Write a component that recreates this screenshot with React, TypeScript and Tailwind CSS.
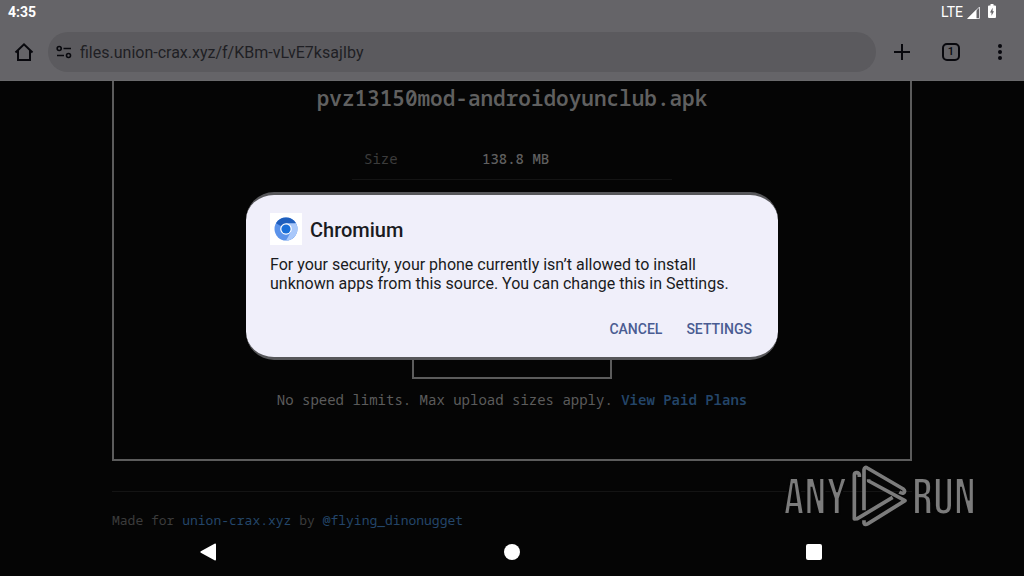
import type { ReactNode } from "react";

type IconButtonProps = {
  label: string;
  children: ReactNode;
};

function IconButton({ label, children }: IconButtonProps) {
  return (
    <button
      type="button"
      aria-label={label}
      className="flex size-6 shrink-0 items-center justify-center"
    >
      {children}
    </button>
  );
}

function StatusBar() {
  return (
    <div className="flex h-6 items-center justify-between px-2 text-sm text-white">
      <span className="font-bold">4:35</span>
      <div className="mr-5 flex items-center gap-1">
        <span>LTE</span>
        <svg viewBox="0 0 13 13" className="size-[13px]" aria-hidden="true">
          <path d="M12.5 1V12.5H1z" fill="none" stroke="#d5d4d8" />
          <path d="M9.500 3.500V13H0z" fill="#fff" />
        </svg>
        <svg viewBox="0 0 8 14" className="mb-[2px] ml-1 h-[14px] w-2" aria-hidden="true">
          <path
            d="M2.5 0h3v1.5H7a1 1 0 0 1 1 1V13a1 1 0 0 1-1 1H1a1 1 0 0 1-1-1V2.500a1 1 0 0 1 1-1h1.500z"
            fill="#fff"
          />
          <path d="M4.600 3.800 2 8.500h1.500v3.200L6 7.200H4.600z" fill="#656468" />
        </svg>
      </div>
    </div>
  );
}

function Toolbar() {
  return (
    <div className="flex h-14 items-center px-3 text-[#08080d]">
      <IconButton label="Home">
        <svg viewBox="0 0 24 24" className="size-6">
          <path
            d="M3.500 12.500 12 4.300l8.500 8.200M6 10.500V20h12v-9.500"
            fill="none"
            stroke="currentColor"
            strokeWidth="2"
          />
        </svg>
      </IconButton>
      <form className="ml-3 flex h-10 grow items-center gap-2 rounded-full bg-[#5b5a5e] px-2">
        <svg viewBox="0 0 16 14" className="h-[14px] w-4" aria-hidden="true">
          <g fill="none" stroke="currentColor" strokeWidth="1.600">
            <circle cx="3.200" cy="3.500" r="2" />
            <path d="M7.500 3.500H15M1 10.500h7" />
            <circle cx="12.500" cy="10.500" r="2" />
          </g>
        </svg>
        <input
          type="text"
          aria-label="Address"
          defaultValue="files.union-crax.xyz/f/KBm-vLvE7ksajIby"
          className="grow bg-transparent pt-[2px] text-base text-[#1f1f24] outline-none"
        />
      </form>
      <div className="ml-[14px] flex items-center gap-[25px]">
        <IconButton label="New tab">
          <svg viewBox="0 0 24 24" className="size-6">
            <path d="M12 4v16M4 12h16" stroke="currentColor" strokeWidth="2" />
          </svg>
        </IconButton>
        <IconButton label="Tabs">
          <span className="flex size-[18px] items-center justify-center rounded-[5px] border-2 border-current pt-px text-[11px] font-medium">
            1
          </span>
        </IconButton>
        <IconButton label="Menu">
          <svg viewBox="0 0 24 24" className="size-6" fill="currentColor">
            <circle cx="12" cy="6" r="2" />
            <circle cx="12" cy="12" r="2" />
            <circle cx="12" cy="18" r="2" />
          </svg>
        </IconButton>
      </div>
    </div>
  );
}

function FilePage() {
  return (
    <div className="mx-auto w-full max-w-[800px] grow font-['Droid_Sans_Mono','Noto_Sans_Mono','DejaVu_Sans_Mono',monospace]">
      <main className="flex flex-col items-center border-x-2 border-b-2 border-[#5c5c5c] pt-px pb-[47px]">
        <h1 className="text-[21px] leading-8 font-semibold text-[#606060]">
          pvz13150mod-androidoyunclub.apk
        </h1>
        <table className="mt-6 w-80 text-left text-sm">
          <tbody>
            <tr className="h-[41px] border-b border-[#141414]">
              <th scope="row" className="w-[118px] px-3 pt-px font-normal text-[#3c3c3c]">
                Size
              </th>
              <td className="px-3 pt-px font-medium text-[#606060]">138.8 MB</td>
            </tr>
          </tbody>
        </table>
        <button
          type="button"
          aria-label="Download"
          className="mt-[151px] h-12 w-[200px] border-2 border-[#5c5c5c]"
        />
        <p className="mt-[9px] text-sm leading-6 text-[#5c5c5c]">
          No speed limits. Max upload sizes apply.{" "}
          <a href="#plans" className="font-semibold text-[#24466a]">
            View Paid Plans
          </a>
        </p>
      </main>
      <footer className="mt-[30px] border-t border-[#141414] pt-4 text-[13px] leading-6 text-[#3c3c3c]">
        Made for{" "}
        <a href="#home" className="text-[#24466a]">
          union-crax.xyz
        </a>{" "}
        by{" "}
        <a href="#author" className="text-[#24466a]">
          @flying_dinonugget
        </a>
      </footer>
    </div>
  );
}

function ChromiumLogo() {
  return (
    <svg viewBox="0 0 32 32" className="size-8" aria-hidden="true">
      <rect width="32" height="32" fill="#fff" />
      <circle cx="16" cy="16" r="11.500" fill="#5b93ea" />
      <path d="M16 16 6 10.300A11.500 11.500 0 0 1 26 10.300z" fill="#1f5fbd" />
      <path d="M16 10.300h10A11.500 11.500 0 0 1 16 27.500l5-8.700z" fill="#a9c8fa" />
      <circle cx="16" cy="16" r="5.800" fill="#fff" />
      <circle cx="16" cy="16" r="4.600" fill="#1a6fd8" />
    </svg>
  );
}

function InstallDialog() {
  return (
    <div className="fixed inset-x-0 top-0 bottom-6 flex items-center justify-center">
      <div
        role="dialog"
        aria-labelledby="dialog-title"
        className="w-[532px] rounded-[28px] border-y-[3px] border-[#57575a] bg-[#f0effa] pt-[18px] pr-[26px] pb-4 pl-6 text-[#1a1b21]"
      >
        <div className="flex items-center gap-2">
          <ChromiumLogo />
          <h2 id="dialog-title" className="pt-[2px] text-xl font-medium">
            Chromium
          </h2>
        </div>
        <p className="mt-[10px] text-base leading-[19px]">
          For your security, your phone currently isn’t allowed to install
          unknown apps from this source. You can change this in Settings.
        </p>
        <div className="mt-6 flex justify-end gap-6 text-sm leading-6 font-medium text-[#4a5c92]">
          <button type="button">CANCEL</button>
          <button type="button">SETTINGS</button>
        </div>
      </div>
    </div>
  );
}

function Watermark() {
  return (
    <div className="fixed right-12 bottom-[46px] flex items-center gap-[5px] font-['Bebas_Neue','Roboto_Condensed','Liberation_Sans_Narrow','Liberation_Sans',sans-serif] text-[52px] leading-[63px] text-[#7c7c7c]">
      <span className="pt-1 [-webkit-text-stroke:2px_#050505]">ANY</span>
      <svg
        viewBox="12 12 165 189"
        className="h-[63px] w-[55px]"
        fill="none"
        stroke="currentColor"
        strokeWidth="11"
        strokeLinejoin="round"
        aria-hidden="true"
      >
        <path d="M34 48V42Q32 34 25 35Q19 36 19 42V174L28 173 134 109" />
        <path d="M48 148V26Q50 16 58 21L166 84Q174 92 166 96Q162 98 154 93" />
        <path d="M62 55V60L171 119 60 188Q50 194 48 186V178" />
      </svg>
      <span className="pt-1 [-webkit-text-stroke:2px_#050505]">RUN</span>
    </div>
  );
}

function NavBar() {
  return (
    <nav className="fixed inset-x-0 bottom-0 flex h-12 items-center justify-center gap-[278px] text-white">
      <IconButton label="Back">
        <svg viewBox="0 0 24 24" className="size-6" fill="currentColor">
          <path d="M16.500 3.700a1 1 0 0 1 1.500.8v15a1 1 0 0 1-1.500.8L2.800 12.800a1 1 0 0 1 0-1.600z" />
        </svg>
      </IconButton>
      <IconButton label="Home screen">
        <span className="size-4 rounded-full bg-white" />
      </IconButton>
      <IconButton label="Recent apps">
        <span className="size-4 rounded-[2px] bg-white" />
      </IconButton>
    </nav>
  );
}

export default function App() {
  return (
    <div className="flex min-h-screen flex-col bg-[#050505] font-[Roboto,sans-serif]">
      <header className="border-b border-[#6a6a6c] bg-[#656468]">
        <StatusBar />
        <Toolbar />
      </header>
      <FilePage />
      <Watermark />
      <InstallDialog />
      <NavBar />
    </div>
  );
}
